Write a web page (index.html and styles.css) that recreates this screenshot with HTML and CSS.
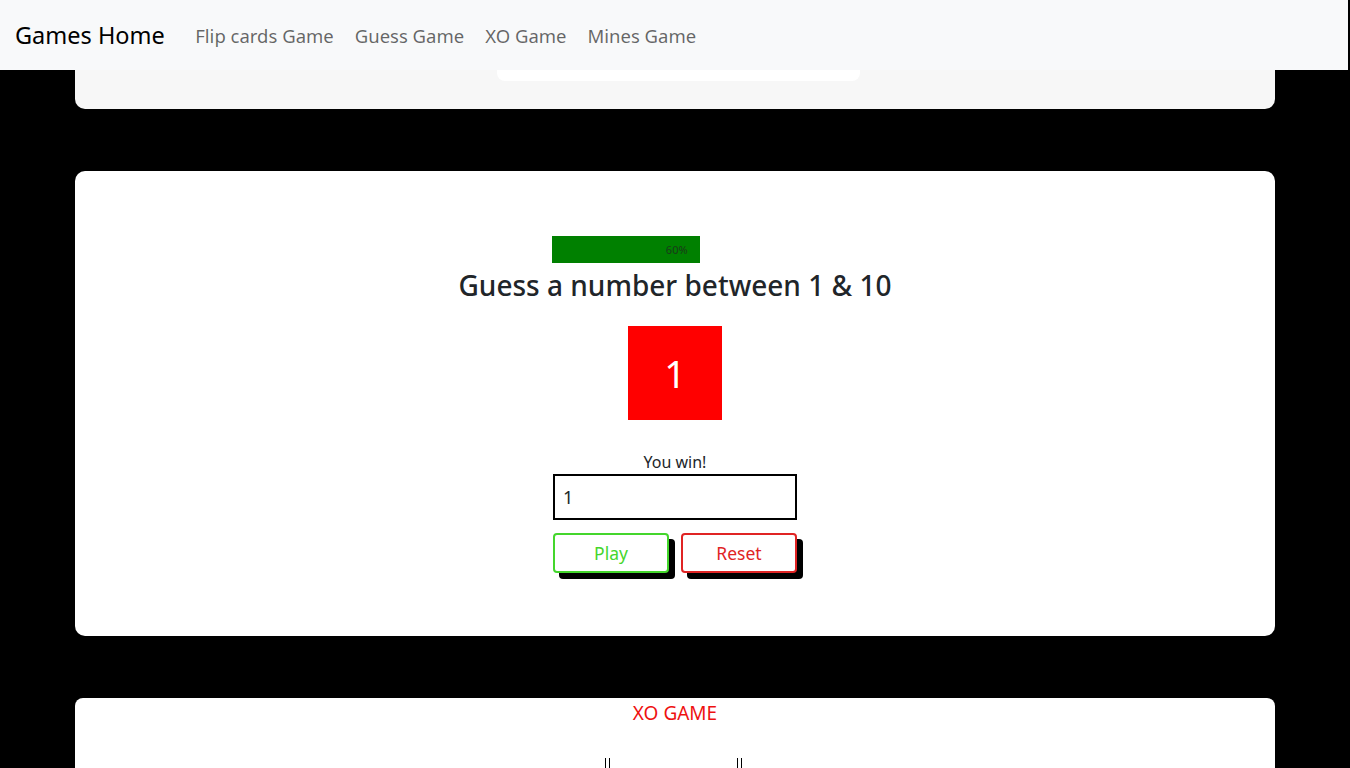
FILE: index.html
```html
<!DOCTYPE html>
<html lang="en">
<head>
<meta charset="utf-8">
<title>Games Home</title>
<link rel="stylesheet" href="styles.css">
</head>
<body>
<nav class="navbar">
  <a class="brand" href="#">Games Home</a>
  <ul class="nav-links">
    <li><a href="#">Flip cards Game</a></li>
    <li><a href="#">Guess Game</a></li>
    <li><a href="#">XO Game</a></li>
    <li><a href="#">Mines Game</a></li>
  </ul>
</nav>
<main class="page">
  <section class="card card-flip">
    <div class="flip-bar"></div>
  </section>
  <section class="card card-guess">
    <div class="progress">
      <div class="progress-fill" style="width:60%">60%</div>
    </div>
    <h2 class="guess-title">Guess a number between 1 &amp; 10</h2>
    <div class="number-box">1</div>
    <p class="result">You win!</p>
    <input class="guess-input" type="text" value="1">
    <div class="btn-row">
      <button class="btn btn-play">Play</button>
      <button class="btn btn-reset">Reset</button>
    </div>
  </section>
  <section class="card card-xo">
    <h3 class="xo-title">XO GAME</h3>
    <div class="xo-board">
      <span class="xo-line"></span><span class="xo-line"></span>
      <span class="xo-gap"></span>
      <span class="xo-line"></span><span class="xo-line"></span>
    </div>
  </section>
</main>
</body>
</html>
```
FILE: styles.css
```css
* { box-sizing: border-box; }
html, body { margin: 0; padding: 0; }
body {
  background: #000;
  font-family: "Noto Sans", "Open Sans", sans-serif;
  color: #212529;
  height: 768px;
  overflow: hidden;
}
.navbar {
  position: fixed;
  top: 0; left: 0; right: 2px;
  height: 70px;
  background: #f8f9fa;
  display: flex;
  align-items: center;
  padding: 0 15px;
  z-index: 10;
}
.brand {
  font-size: 23.5px;
  color: #000;
  text-decoration: none;
  margin-right: 20px;
}
.nav-links {
  list-style: none;
  display: flex;
  margin: 0; padding: 0;
}
.nav-links a {
  display: block;
  font-size: 18.5px;
  color: rgba(0,0,0,0.6);
  text-decoration: none;
  padding: 0 10.5px;
}
.page {
  padding: 0 75px;
  display: flex;
  flex-direction: column;
  gap: 62px;
}
.card {
  border-radius: 10px;
  background: #fff;
}
.card-flip {
  height: 109px;
  background: #f7f7f7;
  display: flex;
  justify-content: center;
  padding-top: 41px;
}
.flip-bar {
  width: 363px;
  height: 40px;
  background: #fff;
  border-radius: 8px;
  margin-left: 6px;
}
.card-guess {
  height: 465px;
  display: flex;
  flex-direction: column;
  align-items: center;
  padding-top: 65px;
}
.progress {
  width: 246px;
  height: 27px;
}
.progress-fill {
  height: 100%;
  background: #008000;
  font-size: 11px;
  color: #1a3a1a;
  text-align: right;
  padding-right: 12px;
  line-height: 27px;
}
.guess-title {
  margin: 2px 0 0;
  font-size: 28px;
  font-weight: 500;
  line-height: 40px;
  color: #212529;
}
.number-box {
  margin-top: 21px;
  width: 94px;
  height: 94px;
  background: #ff0000;
  color: #fff;
  font-size: 38px;
  display: flex;
  align-items: center;
  justify-content: center;
  font-weight: 400;
}
.result {
  margin: 31px 0 0;
  font-size: 16px;
  line-height: 22px;
}
.guess-input {
  width: 244px;
  height: 46px;
  border: 2px solid #000;
  margin-top: 1px;
  font-family: inherit;
  font-size: 18px;
  padding: 0 8px;
  color: #212529;
  outline: none;
}
.btn-row {
  display: flex;
  gap: 12px;
  margin-top: 13px;
}
.btn {
  width: 116px;
  height: 40px;
  background: #fff;
  border-radius: 4px;
  font-family: inherit;
  font-size: 17.5px;
  box-shadow: 6px 6px 0 #000;
  cursor: pointer;
}
.btn-play {
  border: 2px solid #44d62c;
  color: #44d62c;
}
.btn-reset {
  border: 2px solid #e02424;
  color: #e02424;
}
.card-xo {
  height: 200px;
  border-radius: 8px;
  display: flex;
  flex-direction: column;
  align-items: center;
}
.xo-title {
  margin: 2px 0 0;
  font-size: 19px;
  font-weight: 400;
  color: #ee1111;
  line-height: 26px;
}
.xo-board {
  display: flex;
  margin-top: 32px;
  height: 40px;
}
.xo-line {
  width: 1px;
  background: #000;
  margin-right: 3px;
}
.xo-gap { width: 124px; }
```
